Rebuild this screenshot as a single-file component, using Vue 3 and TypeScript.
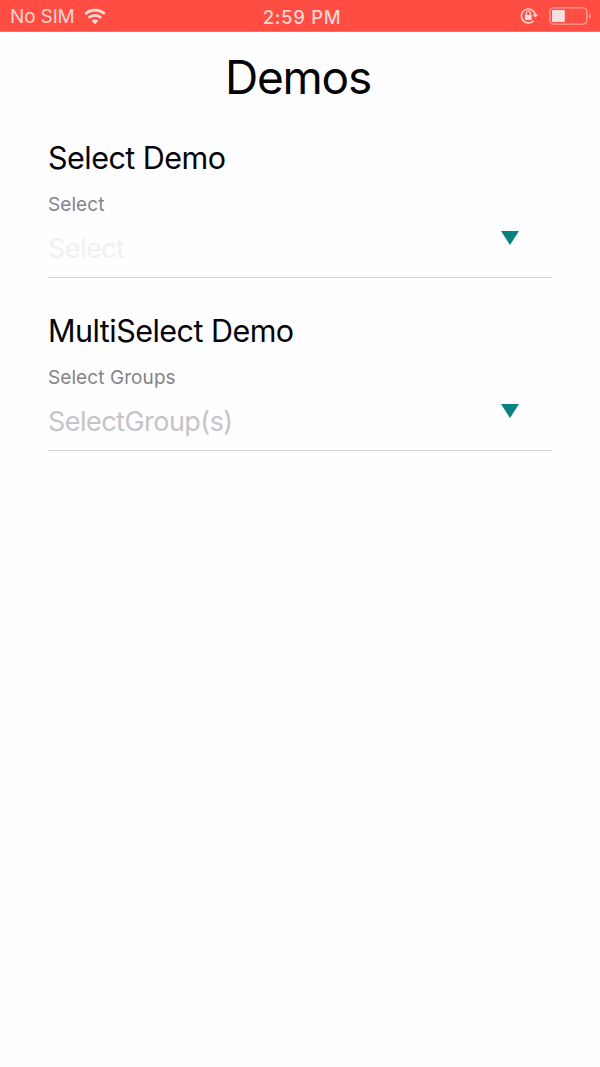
<script setup lang="ts">
interface Field {
  id: string
  heading: string
  label: string
  placeholder: string
}

const fields: Field[] = [
  { id: 'single', heading: 'Select Demo', label: 'Select', placeholder: 'Select' },
  { id: 'multi', heading: 'MultiSelect Demo', label: 'Select Groups', placeholder: 'SelectGroup(s)' },
]
</script>

<template>
  <div class="screen">
    <header class="status">
      <div class="carrier">
        <span class="sim">No SIM</span>
        <svg class="wifi" width="22" height="17" viewBox="0 0 24 18">
          <g fill="none" stroke="#f8dcda" stroke-width="3">
            <path d="M1.4 6.4C7.2 .7 16.8 .7 22.6 6.4" />
            <path d="M5.1 10.5C8.9 6.8 15.1 6.8 18.9 10.5" />
          </g>
          <path d="M8.3 13.6C10.2 11.8 13.8 11.8 15.7 13.6L12 17.4Z" fill="#f8dcda" />
        </svg>
      </div>
      <time class="time">2:59 PM</time>
      <div class="indicators">
        <svg width="18" height="18" viewBox="0 0 18 18">
          <path d="M13.4 13.9A7 7 0 1 1 15.2 7.3" fill="none" stroke="#f8d3d0" stroke-width="1.6" />
          <path d="M12.6 7.2H18L15.3 10.8Z" fill="#f8d3d0" />
          <rect x="4.9" y="7.7" width="6.8" height="5.2" rx=".7" fill="#f8dcda" />
          <path d="M6.3 8V6.2a2 2 0 0 1 4 0V8" fill="none" stroke="#f8dcda" stroke-width="1.2" />
        </svg>
        <svg width="43" height="18" viewBox="0 0 43 18">
          <rect x=".8" y=".9" width="37" height="16.2" rx="3.8" fill="none" stroke="#fa9f99" stroke-width="1.4" />
          <rect x="3" y="3" width="12.8" height="12" rx="1" fill="#f6e0df" />
          <path d="M40 6.3C42.4 7 42.4 11 40 11.7Z" fill="#fa9f99" />
        </svg>
      </div>
    </header>

    <h1 class="title">Demos</h1>

    <main class="fields">
      <section v-for="field in fields" :key="field.id" class="field" :class="field.id">
        <h2>{{ field.heading }}</h2>
        <label>{{ field.label }}</label>
        <div class="control">
          <span class="placeholder">{{ field.placeholder }}</span>
          <svg class="arrow" width="18" height="14" viewBox="0 0 18 14">
            <path d="M0 0H18L9 14Z" fill="#088281" />
          </svg>
        </div>
      </section>
    </main>
  </div>
</template>

<style>
body {
  background: #fefdff;
}
</style>

<style scoped>
.screen {
  min-height: 1067px;
  background: #fefdff;
  color: #050507;
  font-family: Inter, "Liberation Sans", sans-serif;
}
.status {
  box-sizing: border-box;
  display: grid;
  grid-template-columns: 1fr auto 1fr;
  align-items: center;
  height: 32px;
  padding: 1px 8px 0 10px;
  background: #ff4d43;
  border-bottom: 1px solid #ff6a62;
  color: #f8d3d0;
}
.carrier {
  display: flex;
  align-items: center;
  gap: 9px;
}
.sim {
  font-size: 19px;
  letter-spacing: -0.15px;
}
.time {
  padding-left: 2px;
  font-size: 18.5px;
  font-weight: 500;
  letter-spacing: 0.7px;
  line-height: 24px;
}
.sim,
.time {
  padding-top: 1px;
}
.indicators {
  display: flex;
  justify-content: flex-end;
  gap: 11px;
}
.title {
  margin: 15px 0 33px;
  padding-right: 4px;
  font-size: 46px;
  font-weight: 400;
  line-height: 60px;
  letter-spacing: -1.2px;
  text-align: center;
}
.fields {
  display: grid;
  gap: 35px;
  padding: 0 48px;
}
.field {
  box-sizing: border-box;
  height: 138px;
  border-bottom: 1.5px solid #d3d2d6;
}
h2 {
  margin: 0 0 17px;
  font-size: 30.5px;
  font-weight: 400;
  line-height: 36px;
  letter-spacing: -0.53px;
}
label {
  display: block;
  margin-bottom: 14px;
  color: #858487;
  font-size: 19px;
  line-height: 24px;
  letter-spacing: 0.08px;
}
.control {
  display: flex;
  justify-content: space-between;
  padding-right: 33px;
}
.placeholder {
  color: #c5c4c8;
  font-size: 27px;
  line-height: 36px;
  letter-spacing: -0.53px;
}
.single .placeholder {
  color: #f1f0f3;
}
.arrow {
  flex: none;
}
</style>
